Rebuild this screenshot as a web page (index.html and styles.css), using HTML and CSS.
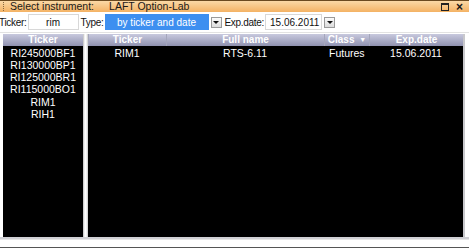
FILE: index.html
```html
<html>
<head>
    <meta charset="utf-8">
    <link rel="stylesheet" href="styles.css">
</head>
<body>
    <div class="window">
        <div class="titlebar">
            <span class="grip"></span>
            <span class="title">Select instrument:</span>
            <span class="title app">LAFT Option-Lab</span>
            <span class="spacer"></span>
            <span class="winbtn box"></span>
            <span class="winbtn close">&#215;</span>
        </div>

        <div class="toolbar">
            <span class="label tick">Ticker:</span>
            <span class="field ticker">rim</span>
            <span class="label type">Type:</span>
            <span class="field select">by ticker and date</span>
            <span class="dropbtn"><span class="arrow"></span></span>
            <span class="label exp">Exp.date:</span>
            <span class="field date">15.06.2011</span>
            <span class="dropbtn"><span class="arrow"></span></span>
        </div>

        <div class="panels">
            <div class="list">
                <div class="head"><div class="hcell">Ticker</div></div>
                <div class="row center">RI245000BF1</div>
                <div class="row center">RI130000BP1</div>
                <div class="row center">RI125000BR1</div>
                <div class="row center">RI115000BO1</div>
                <div class="row center">RIM1</div>
                <div class="row center">RIH1</div>
            </div>
            <div class="splitter"></div>
            <div class="table">
                <div class="head cols">
                    <div class="hcell">Ticker</div>
                    <div class="hcell">Full name</div>
                    <div class="hcell">Class <span class="sort">&#9660;</span></div>
                    <div class="hcell">Exp.date</div>
                </div>
                <div class="row cols">
                    <div class="cell center">RIM1</div>
                    <div class="cell center">RTS-6.11</div>
                    <div class="cell left">Futures</div>
                    <div class="cell center">15.06.2011</div>
                </div>
            </div>
        </div>

        <div class="statusbar"></div>
    </div>
</body>
</html>
```

FILE: styles.css
```css
* {
    margin: 0;
    padding: 0;
    box-sizing: border-box;
}

body {
    width: 469px;
    height: 248px;
    background: white;
    font-family: "Liberation Sans", Arial, sans-serif;
    font-size: 10px;
    overflow: hidden;
}

.window {
    width: 469px;
    height: 248px;
    display: flex;
    flex-direction: column;
    border-top: 1px solid #6b4a20;
}

.titlebar {
    height: 11px;
    display: flex;
    align-items: center;
    background: linear-gradient(#fbd9a6, #f4b264);
    color: #1a1a1a;
    font-size: 10.5px;
    line-height: 11px;
}

.grip {
    width: 1px;
    height: 9px;
    margin: 0 6px 0 3px;
    border-left: 1px dotted #8a6a40;
}

.title.app {
    margin-left: 15px;
}

.spacer {
    flex: 1;
}

.winbtn.box {
    width: 8px;
    height: 8px;
    border: 1px solid #222;
    border-top-width: 2px;
    margin-right: 7px;
}

.winbtn.close {
    font-size: 12px;
    font-weight: bold;
    margin-right: 6px;
    line-height: 10px;
}

.toolbar {
    height: 21px;
    display: flex;
    align-items: center;
    font-size: 10px;
    color: #111;
    border-bottom: 1px solid #e2e2e2;
}

.label {
    white-space: nowrap;
    letter-spacing: -0.3px;
}

.label.tick {
    margin-left: -1px;
    margin-right: 1px;
}

.field {
    height: 16px;
    line-height: 15px;
    border: 1px solid #d8d8d8;
    background: white;
    padding: 0 3px;
    white-space: nowrap;
}

.field.ticker {
    width: 51px;
    text-align: center;
}

.label.type {
    margin-left: 2px;
    margin-right: 1px;
}

.field.select {
    width: 104px;
    background: #3d8ff0;
    border-color: #3d8ff0;
    color: white;
    text-align: center;
}

.dropbtn {
    width: 11px;
    height: 11px;
    margin-left: 2px;
    border: 1px solid #9a9a9a;
    background: linear-gradient(#fbfbfb, #dcdcdc);
    display: flex;
    align-items: center;
    justify-content: center;
}

.arrow {
    width: 0;
    height: 0;
    border-left: 3px solid transparent;
    border-right: 3px solid transparent;
    border-top: 3px solid #111;
}

.label.exp {
    margin-left: 3px;
    margin-right: 1px;
}

.field.date {
    width: 57px;
    text-align: left;
    padding-left: 4px;
}

.panels {
    flex: 1;
    display: flex;
    padding: 1px 4px 0 3px;
    border-bottom: 2px solid #d0d0d4;
}

.list {
    width: 80px;
    background: black;
}

.splitter {
    width: 5px;
    background: linear-gradient(90deg, #bdbdbd, #ffffff 40%, #ffffff 60%, #c8c8c8);
}

.table {
    flex: 1;
    background: black;
    border-right: 2px solid #c8c8cc;
}

.head {
    height: 12px;
    background: linear-gradient(#c8c9de, #9092b0);
    color: white;
    font-weight: bold;
    line-height: 12px;
}

.hcell {
    text-align: center;
    border-left: 1px solid #a4a6bc;
}

.list .hcell {
    border-left: none;
}

.cols {
    display: grid;
    grid-template-columns: 78px 158px 45px 1fr;
}

.sort {
    font-size: 7px;
    vertical-align: 1px;
    margin-left: 2px;
}

.row {
    height: 12.3px;
    line-height: 12px;
    color: white;
    font-size: 10.5px;
}

.list .head + .row,
.table .head + .row {
    margin-top: 0.5px;
}

.center {
    text-align: center;
}

.left {
    text-align: left;
    padding-left: 5px;
}

.statusbar {
    height: 9px;
    border-top: 1px solid #e6e6e6;
    border-bottom: 1px solid #555;
}
```
